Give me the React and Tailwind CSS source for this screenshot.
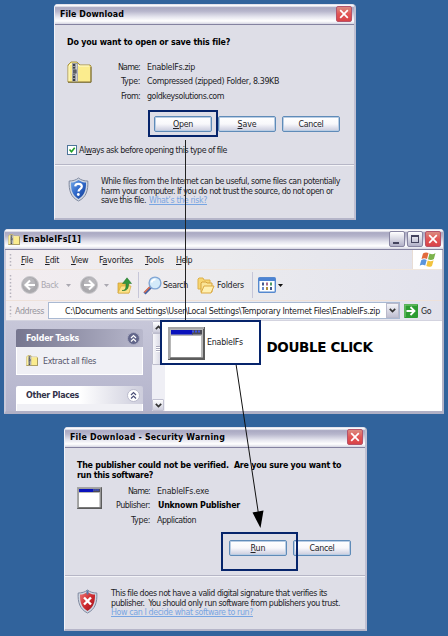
import React, { useLayoutEffect, useRef } from "react";

// A single line of text whose tracking is adjusted to fill the given width.
function T({ w, className = "", children }) {
  const ref = useRef(null);
  useLayoutEffect(() => {
    const el = ref.current;
    el.style.letterSpacing = "0px";
    const natural = el.getBoundingClientRect().width;
    el.style.letterSpacing = (w - natural) / el.textContent.length + "px";
  }, [w]);
  return (
    <span ref={ref} className={"block w-max shrink-0 whitespace-pre " + className}>
      {children}
    </span>
  );
}

function CloseButton() {
  return (
    <div className="ml-auto flex h-[16px] w-[16px] shrink-0 items-center justify-center rounded-[2px] border border-[#b5536a] bg-gradient-to-b from-[#d98a80] via-[#e25555] to-[#d84348]">
      <svg width="10" height="10" viewBox="0 0 10 10">
        <path d="M1.2 1.2 8.8 8.8M8.8 1.2 1.2 8.8" stroke="#fff" strokeWidth="1.7" />
      </svg>
    </div>
  );
}

function TitleBar({ children }) {
  return (
    <div className="flex h-[21px] shrink-0 items-center rounded-t-[3px] border-b border-[#8482a0] bg-[linear-gradient(180deg,#d8d8e6_0%,#ffffff_9%,#aaa9c2_18%,#b7b6cc_36%,#e6e6ef_65%,#ffffff_85%,#d5d5e2_100%)] pl-[5px] pr-[2px] font-bold text-black">
      {children}
    </div>
  );
}

function Button({ w, children }) {
  return (
    <div className="flex h-[16px] w-[58px] shrink-0 items-center justify-center rounded-[2px] border border-[#5f8bb8] bg-gradient-to-b from-white via-[#f8f8fb] to-[#c9cbdd] shadow-[inset_0_0_0_1px_#b9cde4]">
      <T w={w}>{children}</T>
    </div>
  );
}

function Field({ label, lw, w, labelBox, bold = false, children }) {
  return (
    <div className="flex h-[14.3px] items-center">
      <div className={"flex justify-end " + labelBox}>
        <T w={lw}>{label}</T>
      </div>
      <T w={w} className={bold ? "ml-[8px] font-bold text-black" : "ml-[7px]"}>{children}</T>
    </div>
  );
}

function ZipFolder({ className }) {
  return (
    <svg className={className} viewBox="0 0 25 22" preserveAspectRatio="none">
      <path d="M1 21V4l3-3h6l3 3h10l1 1v16z" fill="#fbec8e" stroke="#a89343" />
      <path d="M2 20V5l2-2h6l2 2h10" fill="none" stroke="#fffbd0" />
      <path d="M24 6v15.300H1" fill="none" stroke="#7c713e" />
      <rect x="5" y="2" width="6" height="18.500" fill="#9b9da1" />
      <path d="M7 3v17" stroke="#35383f" strokeWidth="1.800" strokeDasharray="2 1" />
      <path d="M9.700 3v17" stroke="#dedede" />
      <rect x="5.500" y="8" width="4.500" height="5" rx="1" fill="#5c5f67" stroke="#d7d7d7" strokeWidth=".6" />
    </svg>
  );
}

function AppWindow({ className }) {
  return (
    <svg className={className} viewBox="0 0 37 33" preserveAspectRatio="none">
      <rect width="37" height="33" fill="#5c5c5c" />
      <path d="M0 0h36v2H2v30H0z" fill="#a5a5a5" />
      <rect x="2" y="2" width="33" height="28.5" fill="#b7b7b7" />
      <rect x="3" y="9" width="30" height="21" fill="#fff" />
      <rect x="3" y="3" width="22" height="4.5" fill="#0a12bc" />
      <rect x="24" y="3" width="10" height="4.5" fill="#4a4a55" />
      <path d="M24 4.5h9" stroke="#3c52e5" strokeWidth="2" strokeDasharray="2 1" />
    </svg>
  );
}

function Shield({ red = false }) {
  return (
    <svg className="block h-[25px] w-[21px] shrink-0" viewBox="0 0 21 25">
      <defs>
        <linearGradient id="blueShield" x1="0" y1="0" x2="1" y2="1">
          <stop offset="0" stopColor="#74a9e8" />
          <stop offset=".5" stopColor="#2f68c9" />
          <stop offset="1" stopColor="#143c92" />
        </linearGradient>
        <linearGradient id="redShield" x1="0" y1="0" x2="1" y2="1">
          <stop offset="0" stopColor="#ee7777" />
          <stop offset=".5" stopColor="#cf2b30" />
          <stop offset="1" stopColor="#9c1119" />
        </linearGradient>
      </defs>
      <path d="M10.5 1C8 3.2 4.5 4 1.2 4c-.6 9 1.6 16.4 9.3 20 7.7-3.6 9.9-11 9.3-20-3.3 0-6.8-.8-9.3-3z" fill="#cfd6e2" stroke="#808aa0" strokeWidth="1" />
      <path d="M10.5 3C8.300 4.700 5.500 5.500 3 5.600c-.2 7.500 1.600 13.300 7.500 16.400 5.900-3.100 7.700-8.900 7.500-16.400-2.500-.1-5.300-.9-7.500-2.600z" fill={red ? "url(#redShield)" : "url(#blueShield)"} />
      {red ? (
        <>
          <path d="M10.500 1.500v4" stroke="#5878a8" strokeWidth="2" />
          <path d="M7 8.500l7 7M14 8.500l-7 7" stroke="#fff" strokeWidth="2.400" />
        </>
      ) : (
        <>
          <path d="M7.200 9.300c.3-3.300 6.600-3.300 6.600.2 0 2.300-3.300 2.500-3.300 5" fill="none" stroke="#fff" strokeWidth="2.200" />
          <circle cx="10.300" cy="17.500" r="1.400" fill="#fff" />
        </>
      )}
    </svg>
  );
}

function OpenDialog() {
  return (
    <div className="absolute left-[54px] top-[4px] flex h-[216px] w-[302px] flex-col rounded-t-[4px] border-b-2 border-l border-r-2 border-b-[#b5b5c9] border-l-[#f2f2f8] border-r-[#c0c0d2] bg-[#dedee7]">
      <TitleBar>
        <T w={64}>File Download</T>
        <CloseButton />
      </TitleBar>
      <div className="flex h-[140px] shrink-0 flex-col border-b border-[#b6b6c6] pl-[12px] shadow-[0_1px_0_#f4f4f8]">
        <T w={163} className="mt-[11px] h-[12px] font-bold leading-[12px] text-black">Do you want to open or save this file?</T>
        <div className="mt-[12px] flex">
          <ZipFolder className="mt-[1px] h-[22px] w-[25px]" />
          <div>
            <Field label="Name:" lw={22} w={48} labelBox="w-[48px]">EnableIFs.zip</Field>
            <Field label="Type:" lw={19} w={132} labelBox="w-[48px]">Compressed (zipped) Folder, 8.39KB</Field>
            <Field label="From:" lw={19} w={77} labelBox="w-[48px]">goldkeysolutions.com</Field>
          </div>
        </div>
        <div className="ml-[87px] mt-[13px] flex gap-[6px]">
          <Button w={20}><u>O</u>pen</Button>
          <Button w={19}><u>S</u>ave</Button>
          <Button w={25}>Cancel</Button>
        </div>
        <div className="mt-[13px] flex h-[11px] items-center gap-[2px]">
          <svg width="10" height="10" viewBox="0 0 10 10">
            <rect x=".5" y=".5" width="9" height="9" fill="#fff" stroke="#4d7599" />
            <path d="M2.500 4.500l2 2.200 3.200-4" fill="none" stroke="#20a028" strokeWidth="1.600" />
          </svg>
          <T w={148}>Al<u>w</u>ays ask before opening this type of file</T>
        </div>
      </div>
      <div className="flex pl-[13px] pt-[12px]">
        <Shield />
        <div className="ml-[12px] leading-[9.7px]">
          <T w={239}>While files from the Internet can be useful, some files can potentially</T>
          <T w={232}>harm your computer. If you do not trust the source, do not open or</T>
          <div className="flex gap-[3px]">
            <T w={45}>save this file.</T>
            <T w={58} className="text-[#78a5e2] underline">What’s the risk?</T>
          </div>
        </div>
      </div>
    </div>
  );
}

function Grip({ className }) {
  return (
    <svg className={"w-[3px] shrink-0 " + className} preserveAspectRatio="none">
      <path d="M1.500 2v30" stroke="#b6b3bd" strokeWidth="1.500" strokeDasharray="1.500 2" />
    </svg>
  );
}

function RoundArrow({ flip = false }) {
  return (
    <svg className={"block h-[18px] w-[18px] shrink-0 " + (flip ? "-scale-x-100" : "")} viewBox="0 0 18 18">
      <circle cx="9" cy="9" r="8.500" fill="#aaa9ad" stroke="#c9c8cc" />
      <circle cx="8" cy="7.500" r="6" fill="#b8b7bb" />
      <path d="M14 9H5M9 4.500 4.500 9 9 13.500" fill="none" stroke="#fff" strokeWidth="2.100" />
    </svg>
  );
}

function Caret({ color, className }) {
  return (
    <svg className={"h-[3px] w-[5px] shrink-0 " + className} viewBox="0 0 5 3">
      <path d="M0 0h5L2.500 3z" fill={color} />
    </svg>
  );
}

function Chevrons({ dark = false }) {
  return (
    <svg className="h-[13px] w-[13px] shrink-0" viewBox="0 0 13 13">
      <circle cx="6.500" cy="6.500" r="6" fill={dark ? "#62668a" : "#fff"} stroke={dark ? "#a8a9c0" : "#b9b9cb"} />
      <path d="M4 6l2.500-2.500L9 6M4 9.500 6.500 7 9 9.500" fill="none" stroke={dark ? "#fff" : "#4c5078"} strokeWidth="1.200" />
    </svg>
  );
}

function ScrollArrow({ flip = false }) {
  return (
    <div className="flex h-[12px] w-[12px] shrink-0 items-center justify-center rounded-[1px] border border-[#c2c2d2] bg-gradient-to-b from-white to-[#cdcddc]">
      <svg className={flip ? "rotate-180" : ""} width="7" height="5" viewBox="0 0 7 5">
        <path d="M.8 4.200 3.500 1.500 6.200 4.200" fill="none" stroke="#333" strokeWidth="1.700" />
      </svg>
    </div>
  );
}

function ExplorerWindow() {
  return (
    <div className="absolute left-[4px] top-[229px] flex h-[185px] w-[440px] flex-col rounded-t-[4px] border-x-2 border-b-[3px] border-b-[#b0b0c5] border-l-[#c9c9da] border-r-[#b4b4c8] bg-[#ececf1] shadow-[inset_0_-1px_0_#8583a0]">
      <div className="-mx-px flex shrink-0 flex-col">
        <TitleBar>
          <ZipFolder className="-ml-[2px] h-[11px] w-[12px] shrink-0" />
          <T w={58} className="ml-[3px]">EnableIFs[1]</T>
          <div className="ml-auto flex items-center gap-[2px]">
            <div className="flex h-[16px] w-[16px] items-end rounded-[2px] border border-[#8886a2] bg-gradient-to-b from-white to-[#b2b1c8] pb-[2px] pl-[3px]">
              <div className="h-[2px] w-[6px] bg-[#44445e]" />
            </div>
            <div className="flex h-[16px] w-[16px] items-center justify-center rounded-[2px] border border-[#8886a2] bg-gradient-to-b from-white to-[#b2b1c8]">
              <div className="h-[8px] w-[8px] border border-t-2 border-[#44445e]" />
            </div>
            <CloseButton />
          </div>
        </TitleBar>
      </div>
      <div className="flex h-[20px] shrink-0 border-b border-[#f1e6dc] bg-gradient-to-r from-[#f2edf0] via-[#ebebee] to-[#e2e2ec]">
        <Grip className="ml-[3px] mt-[2px] h-[15px]" />
        <div className="flex h-[20px] items-center pl-[9px]">
          <T w={12}><u>F</u>ile</T>
          <T w={14} className="ml-[12px]"><u>E</u>dit</T>
          <T w={17} className="ml-[12px]"><u>V</u>iew</T>
          <T w={34} className="ml-[11px]">F<u>a</u>vorites</T>
          <T w={19} className="ml-[12px]"><u>T</u>ools</T>
          <T w={16} className="ml-[12px]"><u>H</u>elp</T>
        </div>
        <div className="ml-auto flex w-[30px] items-center justify-center border-l border-[#e8ddd5] bg-white">
          <svg width="18" height="17" viewBox="0 0 18 17">
            <path d="M4 2.500C6 1 8 1.200 9.500 2L8 8C6 7 4.500 7 2.500 8z" fill="#e26a3c" />
            <path d="M10.500 2.500c2 1 4 1 6-.5l-1.600 6c-2 1.300-3.900 1.200-5.900.3z" fill="#7cb34c" />
            <path d="M2.200 9.200C4 8 6 8.200 7.700 9L6.200 14.500c-2-1-3.600-1-5.500.2z" fill="#5b95dc" />
            <path d="M8.700 9.500c2 1 4 .9 5.900-.3L13 15c-2 1.200-3.800 1-5.700.1z" fill="#f2c33e" />
          </svg>
        </div>
      </div>
      <div className="flex h-[31px] shrink-0 items-center border-b border-[#eee1d9] bg-gradient-to-r from-[#f3edf0] via-[#ebebee] to-[#e3e3ed]">
        <Grip className="ml-[3px] h-[25px]" />
        <div className="ml-[9px]"><RoundArrow /></div>
        <T w={17} className="ml-[2px] text-[#aaa8b0]">Back</T>
        <Caret color="#aaa8b0" className="ml-[8px]" />
        <div className="ml-[9px]"><RoundArrow flip /></div>
        <Caret color="#aaa8b0" className="ml-[6px]" />
        <svg className="ml-[8px] h-[17px] w-[16px] shrink-0" viewBox="0 0 16 17">
          <path d="M1 6h5l1 1h5v9H1z" fill="#eec54d" stroke="#ca9c35" strokeWidth=".7" />
          <path d="M1 16l3-7h10l-2 7z" fill="#fce38a" stroke="#d9aa3b" strokeWidth=".7" />
          <path d="M5 13.500c4 0 4-3 4-7H5.500L10 .8l4.500 5.700h-3c0 5-1 7.500-6.500 7z" fill="#36963c" stroke="#1e7026" strokeWidth=".5" />
        </svg>
        <div className="ml-[5px] h-[26px] w-px bg-[#c6c6d8]" />
        <svg className="ml-[4px] h-[19px] w-[19px] shrink-0" viewBox="0 0 19 19">
          <path d="M1.500 17.500 8 11" stroke="#4361a4" strokeWidth="3" />
          <path d="M1.300 16.500 7 10.800" stroke="#e0704f" strokeWidth="1.600" />
          <circle cx="12" cy="7" r="5.900" fill="#d3eafa" stroke="#81a6d5" strokeWidth="1.400" />
          <path d="M8.500 6.500c.5-2 2-3 4-2.800" fill="none" stroke="#fff" strokeWidth="1.800" />
        </svg>
        <T w={25} className="ml-[1px]">Search</T>
        <svg className="ml-[9px] h-[17px] w-[18px] shrink-0" viewBox="0 0 18 17">
          <path d="M1 12V2l1-1h4l1 2h6v9z" fill="#f7d672" stroke="#ddb04a" />
          <path d="M4 15V6l1-1h4l1 1h5v9z" fill="#fae497" stroke="#d5a23d" />
          <path d="M4 16l3-7h10l-3 7z" fill="#fff0b2" stroke="#dba940" />
        </svg>
        <T w={27} className="ml-[2px]">Folders</T>
        <div className="ml-[8px] h-[26px] w-px bg-[#c6c6d8]" />
        <svg className="ml-[5px] h-[16px] w-[18px] shrink-0" viewBox="0 0 18 16">
          <rect x=".7" y=".7" width="16.600" height="14.600" rx="1" fill="#fff" stroke="#5689cf" strokeWidth="1.400" />
          <rect x="1" y="1" width="16" height="3" fill="#4b83d3" />
          <path d="M4 5.500h2v3H4zM12 10h2v3h-2z" fill="#43598c" />
          <path d="M8 5.500h2v3H8z" fill="#a6688a" />
          <path d="M12 5.500h2v3h-2z" fill="#4d9968" />
          <path d="M4 10h2v3H4z" fill="#6888cd" />
          <path d="M8 10h2v3H8z" fill="#af8e3c" />
        </svg>
        <Caret color="#111" className="ml-[2px]" />
      </div>
      <div className="flex h-[19px] shrink-0 items-center bg-gradient-to-r from-[#f2edf0] via-[#ebebee] to-[#e2e2ec]">
        <Grip className="ml-[3px] h-[13px]" />
        <T w={29} className="ml-[3px] text-[#96949c]">Address</T>
        <div className="ml-[4px] flex h-[17px] w-[352px] items-center border border-[#a9b9d2] bg-white pl-[16px]">
          <T w={315}>C:\Documents and Settings\User\Local Settings\Temporary Internet Files\EnableIFs.zip</T>
          <div className="ml-auto flex h-[15px] w-[13px] items-center justify-center border border-[#b9b9ca] bg-gradient-to-b from-[#f4f4f8] to-[#c0c0d2]">
            <svg width="7" height="5" viewBox="0 0 7 5">
              <path d="M.8.8 3.500 3.500 6.200.8" fill="none" stroke="#333" strokeWidth="1.700" />
            </svg>
          </div>
        </div>
        <svg className="ml-[4px] h-[14px] w-[14px] shrink-0" viewBox="0 0 14 14">
          <rect width="14" height="14" rx="1" fill="#2c9c31" />
          <path d="M1 13V1h12" fill="none" stroke="#83cb7f" />
          <path d="M2.500 7H10M6.500 3l4 4-4 4" fill="none" stroke="#fff" strokeWidth="1.800" />
        </svg>
        <T w={10} className="ml-[3px]">Go</T>
      </div>
      <div className="flex min-h-0 grow border-t border-[#d3d3df] bg-white">
        <div className="flex w-[146px] shrink-0 flex-col overflow-hidden bg-gradient-to-b from-[#c7c7d9] to-[#b4b4cc] pl-[10px] pt-[8px]">
          <div className="flex h-[18px] w-[127px] shrink-0 items-center rounded-t-[2px] bg-gradient-to-r from-[#76768f] to-[#b8b8cc] pl-[10px] pr-[3px]">
            <T w={53} className="font-bold text-white">Folder Tasks</T>
            <div className="ml-auto flex"><Chevrons dark /></div>
          </div>
          <div className="flex h-[28px] w-[127px] shrink-0 items-center border border-t-0 border-white bg-[#f0f0f5] pl-[9px]">
            <ZipFolder className="h-[11px] w-[12px]" />
            <T w={53} className="ml-[5px] text-[#55556a]">Extract all files</T>
          </div>
          <div className="mt-[11px] flex h-[18px] w-[127px] shrink-0 items-center rounded-t-[2px] bg-gradient-to-r from-white via-white to-[#cdcddc] pl-[10px] pr-[3px]">
            <T w={53} className="font-bold text-[#33334a]">Other Places</T>
            <div className="ml-auto flex"><Chevrons /></div>
          </div>
          <div className="w-[127px] grow border-x border-white bg-[#f0f0f5]" />
        </div>
        <div className="flex w-[13px] shrink-0 flex-col bg-[#efeff5]">
          <ScrollArrow />
          <div className="flex h-[32px] w-[12px] items-center justify-center rounded-[1px] border border-[#bdbdcd] bg-gradient-to-r from-[#f8f8fb] to-[#cfcfdd]">
            <div className="h-[6px] w-[5px] bg-[repeating-linear-gradient(180deg,#aaaabc_0px_1px,#ffffff_1px_2px)]" />
          </div>
          <div className="mt-auto"><ScrollArrow flip /></div>
        </div>
        <T w={106} className="ml-[101.5px] mt-[16px] text-[13.5px] font-bold leading-[20px] text-black [font-family:'DejaVu_Sans',sans-serif]">DOUBLE CLICK</T>
      </div>
    </div>
  );
}

function SecurityDialog() {
  return (
    <div className="absolute left-[64px] top-[427px] flex h-[204px] w-[303px] flex-col rounded-t-[4px] border-b-2 border-l border-r-2 border-b-[#b5b5c9] border-l-[#f2f2f8] border-r-[#c0c0d2] bg-[#dedee7]">
      <TitleBar>
        <T w={155}>File Download - Security Warning</T>
        <CloseButton />
      </TitleBar>
      <div className="flex h-[128px] shrink-0 flex-col border-b border-[#b6b6c6] pl-[12px] shadow-[0_1px_0_#f4f4f8]">
        <div className="mt-[12px] font-bold leading-[10px] text-black">
          <T w={264}>{"The publisher could not be verified.  Are you sure you want to"}</T>
          <T w={76}>run this software?</T>
        </div>
        <div className="mt-[4px] flex">
          <AppWindow className="mt-[3px] h-[22px] w-[25px]" />
          <div>
            <Field label="Name:" lw={22} w={52} labelBox="w-[48px]">EnableIFs.exe</Field>
            <Field label="Publisher:" lw={34} w={82} labelBox="w-[48px]" bold>Unknown Publisher</Field>
            <Field label="Type:" lw={19} w={39} labelBox="w-[48px]">Application</Field>
          </div>
        </div>
        <div className="ml-[152px] mt-[13px] flex gap-[6px]">
          <Button w={15}><u>R</u>un</Button>
          <Button w={25}>Cancel</Button>
        </div>
      </div>
      <div className="flex pl-[12px] pt-[13px]">
        <Shield red />
        <div className="ml-[13px] leading-[9.7px]">
          <T w={216}>This file does not have a valid digital signature that verifies its</T>
          <T w={229}>{"publisher.  You should only run software from publishers you trust."}</T>
          <T w={142} className="text-[#78a5e2] underline">How can I decide what software to run?</T>
        </div>
      </div>
    </div>
  );
}

export default function App() {
  return (
    <div className="relative h-[636px] w-[448px] overflow-hidden bg-[#31639c] text-[8.8px] leading-[12px] text-[#222226] [font-family:'DejaVu_Sans_Condensed','DejaVu_Sans',sans-serif]">
      <OpenDialog />
      <ExplorerWindow />
      <SecurityDialog />
      <div className="absolute left-[148px] top-[110px] h-[27px] w-[70px] border-2 border-[#06246b]" />
      <svg className="absolute left-0 top-0" width="448" height="636" viewBox="0 0 448 636">
        <path d="M185.500 140V321" stroke="#222" strokeWidth="1" />
        <path d="M236 364 258.500 514" stroke="#111" strokeWidth="1" />
        <path d="M252.500 512.500 263.500 510.500 260.500 528z" fill="#000" />
      </svg>
      <div className="absolute left-[160px] top-[320px] flex h-[45px] w-[101px] border-2 border-[#06246b] bg-white pl-[6px] pt-[5px]">
        <AppWindow className="h-[33px] w-[37px] shrink-0" />
        <T w={36} className="ml-[2px] mt-[9px]">EnableIFs</T>
      </div>
      <div className="absolute left-[221px] top-[532px] h-[39px] w-[77px] border-2 border-[#06246b]" />
    </div>
  );
}
